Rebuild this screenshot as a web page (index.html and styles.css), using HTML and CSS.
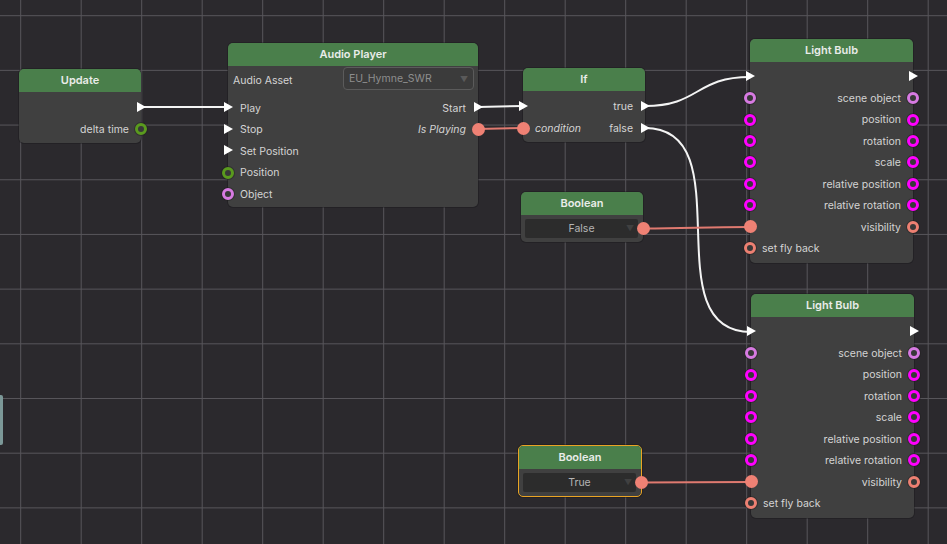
FILE: index.html
```html
<!DOCTYPE html>
<html>
<head>
<meta charset="utf-8">
<link rel="stylesheet" href="styles.css">
</head>
<body>
<div class="canvas">
  <div class="edge-tab"></div>

  <svg class="wires" width="947" height="544" viewBox="0 0 947 544">
    <path class="w-flow" d="M141,107 L228,107"/>
    <path class="w-flow" d="M478,107 L523,106"/>
    <path class="w-data" d="M478,129 L523,128"/>
    <path class="w-flow" d="M645,106 C700,106 695,77 750,77"/>
    <path class="w-flow" d="M645,128 C745,128 651,332 751,332"/>
    <path class="w-data" d="M643,228.5 C690,228.5 700,227 750,227"/>
    <path class="w-data" d="M641,482.5 C690,482.5 700,482 751,482"/>
  </svg>

  <!-- Update -->
  <div class="node node-update">
    <div class="title">Update</div>
    <div class="body pad-update">
      <div class="row r22"><span class="spacer"></span><i class="pin flow out"></i></div>
      <div class="row r22"><span class="spacer"></span><span class="lbl">delta time</span><i class="pin ring green out"></i></div>
    </div>
  </div>

  <!-- Audio Player -->
  <div class="node node-audio">
    <div class="title">Audio Player</div>
    <div class="body pad-audio">
      <div class="asset-row">
        <span class="lbl">Audio Asset</span>
        <div class="select">
          <span class="select-text">EU_Hymne_SWR</span>
          <span class="caret">▼</span>
        </div>
      </div>
      <div class="row r21"><i class="pin flow in"></i><span class="lbl">Play</span><span class="spacer"></span><span class="lbl">Start</span><i class="pin flow out"></i></div>
      <div class="row r21"><i class="pin flow in"></i><span class="lbl">Stop</span><span class="spacer"></span><span class="lbl it">Is Playing</span><i class="pin dot out"></i></div>
      <div class="row r21"><i class="pin flow in"></i><span class="lbl">Set Position</span></div>
      <div class="row r21"><i class="pin ring green in"></i><span class="lbl">Position</span></div>
      <div class="row r21"><i class="pin ring lilac in"></i><span class="lbl">Object</span></div>
    </div>
  </div>

  <!-- If -->
  <div class="node node-if">
    <div class="title">If</div>
    <div class="body pad-if">
      <div class="row r22"><i class="pin flow in"></i><span class="spacer"></span><span class="lbl">true</span><i class="pin flow out"></i></div>
      <div class="row r22"><i class="pin dot in"></i><span class="lbl it">condition</span><span class="spacer"></span><span class="lbl">false</span><i class="pin flow out"></i></div>
    </div>
  </div>

  <!-- Boolean 1 -->
  <div class="node node-bool1">
    <div class="title">Boolean</div>
    <div class="body bool-body">
      <div class="bool-select"><span>False</span><span class="caret dark">▼</span></div>
      <i class="pin dot out mid"></i>
    </div>
  </div>

  <!-- Boolean 2 (selected) -->
  <div class="node node-bool2 selected">
    <div class="title">Boolean</div>
    <div class="body bool-body">
      <div class="bool-select"><span>True</span><span class="caret dark">▼</span></div>
      <i class="pin dot out mid"></i>
    </div>
  </div>

  <!-- Light Bulb 1 -->
  <div class="node node-bulb node-bulb1">
    <div class="title">Light Bulb</div>
    <div class="body pad-bulb">
      <div class="row rb"><i class="pin flow in"></i><span class="spacer"></span><i class="pin flow out"></i></div>
      <div class="row rb"><i class="pin ring lilac in"></i><span class="spacer"></span><span class="lbl">scene object</span><i class="pin ring lilac out"></i></div>
      <div class="row rb"><i class="pin ring mag in"></i><span class="spacer"></span><span class="lbl">position</span><i class="pin ring mag out"></i></div>
      <div class="row rb"><i class="pin ring mag in"></i><span class="spacer"></span><span class="lbl">rotation</span><i class="pin ring mag out"></i></div>
      <div class="row rb"><i class="pin ring mag in"></i><span class="spacer"></span><span class="lbl">scale</span><i class="pin ring mag out"></i></div>
      <div class="row rb"><i class="pin ring mag in"></i><span class="spacer"></span><span class="lbl">relative position</span><i class="pin ring mag out"></i></div>
      <div class="row rb"><i class="pin ring mag in"></i><span class="spacer"></span><span class="lbl">relative rotation</span><i class="pin ring mag out"></i></div>
      <div class="row rb"><i class="pin dot in"></i><span class="spacer"></span><span class="lbl">visibility</span><i class="pin ring salmon out"></i></div>
      <div class="row rb"><i class="pin ring salmon in"></i><span class="lbl">set fly back</span></div>
    </div>
  </div>

  <!-- Light Bulb 2 -->
  <div class="node node-bulb node-bulb2">
    <div class="title">Light Bulb</div>
    <div class="body pad-bulb">
      <div class="row rb"><i class="pin flow in"></i><span class="spacer"></span><i class="pin flow out"></i></div>
      <div class="row rb"><i class="pin ring lilac in"></i><span class="spacer"></span><span class="lbl">scene object</span><i class="pin ring lilac out"></i></div>
      <div class="row rb"><i class="pin ring mag in"></i><span class="spacer"></span><span class="lbl">position</span><i class="pin ring mag out"></i></div>
      <div class="row rb"><i class="pin ring mag in"></i><span class="spacer"></span><span class="lbl">rotation</span><i class="pin ring mag out"></i></div>
      <div class="row rb"><i class="pin ring mag in"></i><span class="spacer"></span><span class="lbl">scale</span><i class="pin ring mag out"></i></div>
      <div class="row rb"><i class="pin ring mag in"></i><span class="spacer"></span><span class="lbl">relative position</span><i class="pin ring mag out"></i></div>
      <div class="row rb"><i class="pin ring mag in"></i><span class="spacer"></span><span class="lbl">relative rotation</span><i class="pin ring mag out"></i></div>
      <div class="row rb"><i class="pin dot in"></i><span class="spacer"></span><span class="lbl">visibility</span><i class="pin ring salmon out"></i></div>
      <div class="row rb"><i class="pin ring salmon in"></i><span class="lbl">set fly back</span></div>
    </div>
  </div>
</div>
</body>
</html>
```

FILE: styles.css
```css
* { box-sizing: border-box; }
html, body { margin: 0; padding: 0; }
body {
  width: 947px;
  height: 544px;
  overflow: hidden;
  background: #2b292d;
  font-family: Inter, "Noto Sans", "Liberation Sans", sans-serif;
}
.canvas {
  position: relative;
  width: 947px;
  height: 544px;
  background-color: #2b292d;
  background-image:
    linear-gradient(to right, #57555a 0, #57555a 1.2px, transparent 1.2px),
    linear-gradient(to bottom, #57555a 0, #57555a 1.2px, transparent 1.2px);
  background-size: 60.5px 100%, 100% 54.7px;
  background-position: 20.2px 0, 0 15.2px;
}
.edge-tab {
  position: absolute;
  left: 0;
  top: 395px;
  width: 3px;
  height: 50px;
  background: #7c9898;
  border-radius: 0 2px 2px 0;
}
.wires {
  position: absolute;
  left: 0;
  top: 0;
  z-index: 1;
}
.wires path { fill: none; stroke-width: 2; }
.w-flow { stroke: #f4f4f4; }
.w-data { stroke: #e07a70; }

.node {
  position: absolute;
  z-index: 2;
  background: #404040;
  border-radius: 5px;
  box-shadow: 0 0 0 1px rgba(20, 20, 22, 0.35);
  color: #d4d4d4;
  font-size: 10.5px;
}
.title {
  height: 23px;
  line-height: 23px;
  text-align: center;
  background: #4a7f4b;
  color: #e9ece9;
  font-weight: 600;
  font-size: 11px;
  border-radius: 5px 5px 0 0;
}
.body { position: relative; }

.node-update { left: 19px; top: 69px; width: 122px; height: 74px; }
.node-audio  { left: 228px; top: 43px; width: 250px; height: 164px; }
.node-if     { left: 523px; top: 68px; width: 122px; height: 74px; }
.node-bool1  { left: 521px; top: 192px; width: 122px; height: 50px; }
.node-bool2  { left: 518px; top: 445px; width: 124px; height: 52px; }
.node-bulb   { width: 163px; height: 224px; }
.node-bulb1  { left: 750px; top: 39px; }
.node-bulb2  { left: 751px; top: 294px; }

.selected { border: 1px solid #e9a424; }
.selected .title { border-radius: 4px 4px 0 0; }

.pad-update { padding: 4px 0 3px; }
.pad-if { padding: 4px 0 3px; }
.pad-audio { padding: 0 0 2px; }
.pad-bulb { padding: 4px 0 4px; }

.row {
  position: relative;
  display: flex;
  align-items: center;
  padding: 0 12px 0 12px;
  white-space: nowrap;
}
.r22 { height: 22px; }
.r21 { height: 21.6px; }
.rb  { height: 21.45px; }
.spacer { flex: 1; }
.lbl { line-height: 14px; padding-top: 1.5px; }
.it { font-style: italic; }

.asset-row {
  display: flex;
  align-items: flex-start;
  height: 31px;
  padding: 1px 4px 0 5px;
}
.asset-row .lbl { line-height: 24px; flex: 1; }
.select {
  width: 131px;
  height: 23px;
  display: flex;
  align-items: center;
  padding: 0 5px;
  border: 1px solid #5b5b5b;
  border-radius: 4px;
  background: #3b3b3b;
  color: #8e8e8e;
}
.select-text { flex: 1; }
.caret { font-size: 8px; color: #5a5a5a; }
.caret.dark { color: #404040; position: absolute; right: 4px; }

.bool-body { padding: 4px 5px 4px 4px; }
.bool-select {
  position: relative;
  height: 19px;
  line-height: 19px;
  text-align: center;
  background: #2c2c2c;
  border-radius: 2px;
  color: #b5b5b5;
}

.pin { position: absolute; display: block; }
.pin.in  { left: 0; }
.pin.out { right: 0; }

.pin.flow {
  width: 0; height: 0;
  border-top: 5.5px solid transparent;
  border-bottom: 5.5px solid transparent;
  border-left: 9px solid #ffffff;
  top: 50%;
  margin-top: -5.5px;
}
.pin.flow.in { left: -4px; }
.pin.flow.out { right: -5px; }

.pin.ring {
  width: 12px; height: 12px;
  border-radius: 50%;
  border: 3px solid #ff00ff;
  background: #383838;
  top: 50%;
  margin-top: -6px;
  box-shadow: 0 0 0 1px rgba(30, 30, 30, 0.45);
}
.pin.ring.in { left: -6px; }
.pin.ring.out { right: -6px; }
.green { border-color: #5a9a1e !important; }
.lilac { border-color: #d77ae2 !important; }
.mag { border-color: #ff00ff !important; }
.salmon { border-color: #ed8072 !important; }

.pin.dot {
  width: 13px; height: 13px;
  border-radius: 50%;
  background: #ef8174;
  top: 50%;
  margin-top: -6.5px;
}
.pin.dot.in { left: -6.5px; }
.pin.dot.out { right: -6.5px; }
```
